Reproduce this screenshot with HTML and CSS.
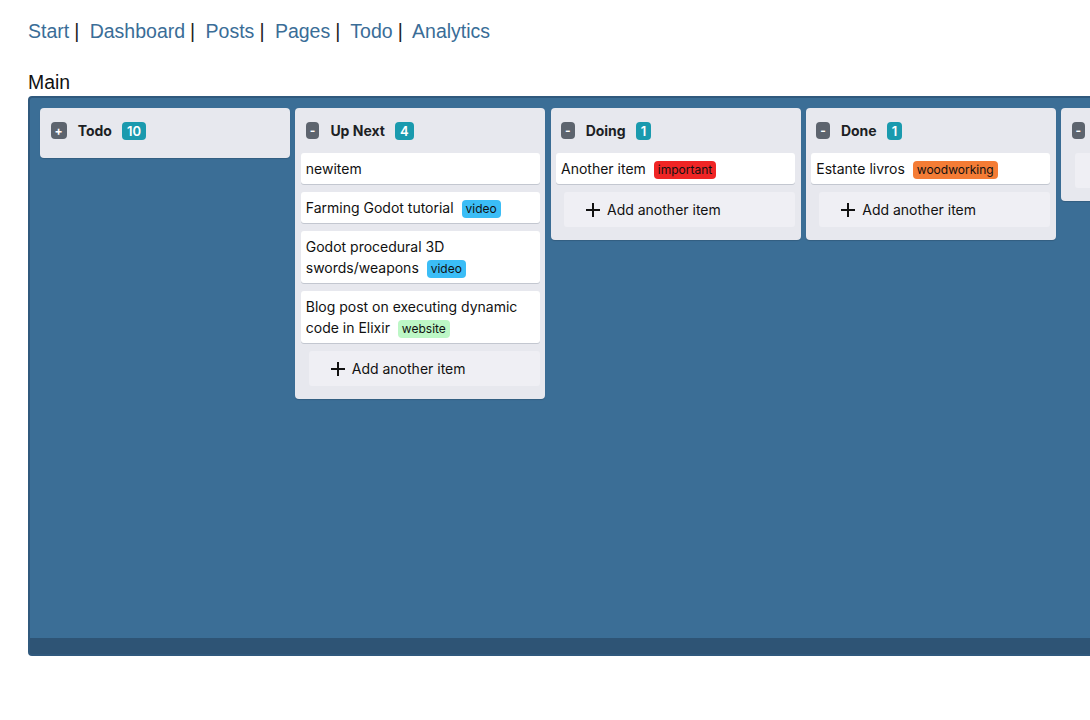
FILE: index.html
```html
<!DOCTYPE html>
<html>
<head>
<meta charset="utf-8">
<link rel="stylesheet" href="styles.css">
</head>
<body>
<nav class="nav">
  <a href="#">Start</a><span class="sep">|</span>
  <a href="#">Dashboard</a><span class="sep">|</span>
  <a href="#">Posts</a><span class="sep">|</span>
  <a href="#">Pages</a><span class="sep">|</span>
  <a href="#">Todo</a><span class="sep">|</span>
  <a href="#">Analytics</a>
</nav>
<h2 class="title">Main</h2>
<div class="board">
  <div class="lanes">
    <section class="lane">
      <header class="lane-head"><span class="toggle">+</span><span class="lane-name">Todo</span><span class="count">10</span></header>
    </section>
    <section class="lane">
      <header class="lane-head"><span class="toggle">-</span><span class="lane-name">Up Next</span><span class="count">4</span></header>
      <div class="card">newitem</div>
      <div class="card">Farming Godot tutorial <span class="tag tag-video">video</span></div>
      <div class="card">Godot procedural 3D swords/weapons <span class="tag tag-video">video</span></div>
      <div class="card">Blog post on executing dynamic code in Elixir <span class="tag tag-website">website</span></div>
      <div class="add"><svg class="plus" width="16" height="16" viewBox="0 0 16 16"><path d="M8 1v14M1 8h14" stroke="#111" stroke-width="2" fill="none"/></svg>Add another item</div>
    </section>
    <section class="lane">
      <header class="lane-head"><span class="toggle">-</span><span class="lane-name">Doing</span><span class="count">1</span></header>
      <div class="card">Another item <span class="tag tag-important">important</span></div>
      <div class="add"><svg class="plus" width="16" height="16" viewBox="0 0 16 16"><path d="M8 1v14M1 8h14" stroke="#111" stroke-width="2" fill="none"/></svg>Add another item</div>
    </section>
    <section class="lane">
      <header class="lane-head"><span class="toggle">-</span><span class="lane-name">Done</span><span class="count">1</span></header>
      <div class="card">Estante livros <span class="tag tag-wood">woodworking</span></div>
      <div class="add"><svg class="plus" width="16" height="16" viewBox="0 0 16 16"><path d="M8 1v14M1 8h14" stroke="#111" stroke-width="2" fill="none"/></svg>Add another item</div>
    </section>
    <section class="lane">
      <header class="lane-head"><span class="toggle">-</span><span class="lane-name">Archive</span><span class="count">0</span></header>
      <div class="add"><svg class="plus" width="16" height="16" viewBox="0 0 16 16"><path d="M8 1v14M1 8h14" stroke="#111" stroke-width="2" fill="none"/></svg>Add another item</div>
    </section>
  </div>
  <div class="scrollbar"></div>
</div>
</body>
</html>
```
FILE: styles.css
```css
html, body {
  margin: 0;
  padding: 0;
  overflow: hidden;
  background: #fff;
}
body {
  padding: 20px 0 0 28px;
  font-family: "Liberation Sans", Arial, sans-serif;
  color: #111;
}
.nav {
  font-size: 19.5px;
  line-height: 22px;
  white-space: nowrap;
}
.nav a {
  color: #3a6d97;
  text-decoration: none;
}
.sep {
  color: #222;
  margin: 0 5px 0 5px;
}
.title {
  margin: 29px 0 3px 0;
  font-size: 19.4px;
  line-height: 22px;
  font-weight: normal;
  color: #111;
}
.board {
  width: 1500px;
  height: 560px;
  box-sizing: border-box;
  border: 2px solid #30597d;
  border-radius: 4px;
  background: #3b6e96;
  display: flex;
  flex-direction: column;
  font-family: Inter, "Noto Sans", sans-serif;
}
.lanes {
  flex: 1;
  padding: 10px;
  display: flex;
  align-items: flex-start;
  gap: 5.25px;
}
.scrollbar {
  height: 16px;
  background: #2e5475;
}
.lane {
  width: 250px;
  flex: none;
  box-sizing: border-box;
  background: #e7e8ee;
  border-radius: 4px;
  padding: 0 5.5px 5px 5.5px;
  box-shadow: 0 1px 1px rgba(0,0,0,0.15);
}
.lane-head {
  display: flex;
  align-items: center;
  height: 45px;
  box-sizing: border-box;
  padding: 14px 5px 14px 5px;
}
.toggle {
  display: inline-block;
  background: #5d646e;
  color: #fff;
  font-size: 12px;
  font-weight: 700;
  line-height: 17px;
  height: 17px;
  padding: 0 4px;
  border-radius: 4px;
}
.lane-name {
  font-size: 14px;
  font-weight: 700;
  color: #1d1f24;
  margin-left: 11px;
}
.count {
  margin-left: 10px;
  background: #1a9aae;
  color: #fff;
  font-size: 13px;
  font-weight: 600;
  line-height: 18px;
  height: 18px;
  padding: 0 5px;
  border-radius: 4px;
}
.card {
  background: #fff;
  border-radius: 3px;
  padding: 5px 5px;
  font-size: 14px;
  line-height: 21px;
  color: #111;
  margin-bottom: 8px;
  box-shadow: 0 1px 0 #c3c7d0;
}
.tag {
  display: inline-block;
  font-size: 12px;
  line-height: 18px;
  padding: 0 4px;
  border-radius: 4px;
  margin-left: 4px;
  color: #111;
  vertical-align: 0;
}
.tag-video { background: #3bbdf6; }
.tag-website { background: #bdf7c6; }
.tag-important { background: #ef2525; }
.tag-wood { background: #f47c35; }
.add {
  margin: 0 0 8px 8px;
  height: 35px;
  box-sizing: border-box;
  background: #efeff4;
  border-radius: 3px;
  display: flex;
  align-items: center;
  padding-left: 21px;
  font-size: 14px;
  color: #111;
}
.plus {
  margin-right: 6px;
}
```
